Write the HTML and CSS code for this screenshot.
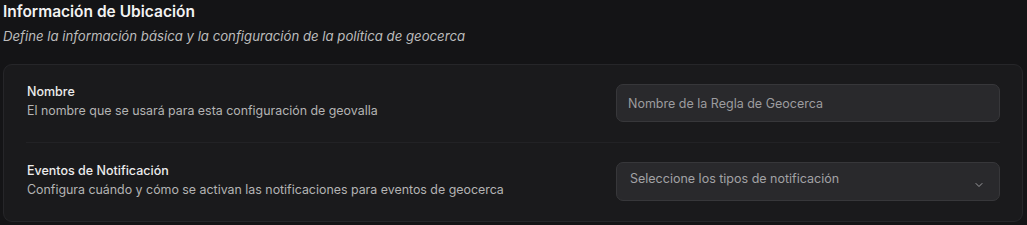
FILE: index.html
```html
<!DOCTYPE html>
<html lang="es">
<head>
    <meta charset="UTF-8">
    <meta name="viewport" content="width=device-width, initial-scale=1.0">
    <title>Información de Ubicación</title>
    <link rel="stylesheet" href="styles.css">
</head>
<body>
    <div class="section">
        <h2 class="section-title">Información de Ubicación</h2>
        <p class="section-subtitle">Define la información básica y la configuración de la política de geocerca</p>

        <div class="card">
            <div class="field-row">
                <div class="field-text">
                    <div class="field-label">Nombre</div>
                    <div class="field-desc">El nombre que se usará para esta configuración de geovalla</div>
                </div>
                <div class="field-control">
                    <input type="text" class="text-input" placeholder="Nombre de la Regla de Geocerca">
                </div>
            </div>

            <div class="field-row">
                <div class="field-text">
                    <div class="field-label">Eventos de Notificación</div>
                    <div class="field-desc">Configura cuándo y cómo se activan las notificaciones para eventos de geocerca</div>
                </div>
                <div class="field-control">
                    <div class="select-box">
                        <span class="select-placeholder">Seleccione los tipos de notificación</span>
                        <svg class="chevron" width="12" height="12" viewBox="0 0 24 24" fill="none" stroke="currentColor" stroke-width="1.8" stroke-linecap="round" stroke-linejoin="round">
                            <path d="M6 9l6 6 6-6"/>
                        </svg>
                    </div>
                </div>
            </div>
        </div>
    </div>
</body>
</html>
```

FILE: styles.css
```css
body {
    margin: 0;
    padding: 0 3px;
    background: #141416;
    font-family: Inter, 'Noto Sans', sans-serif;
    color: #e6e6e6;
}

.section {
    padding-top: 1px;
}

.section-title {
    margin: 0;
    font-size: 15.5px;
    font-weight: 600;
    line-height: 22px;
    color: #f2f2f2;
}

.section-subtitle {
    margin: 4px 0 0 0;
    font-size: 13.2px;
    font-style: italic;
    line-height: 18px;
    color: #bdbdbd;
}

.card {
    margin-top: 19px;
    background: #1a1a1c;
    border: 1px solid #262629;
    border-radius: 9px;
    padding: 0 22px;
    width: 974px;
}

.field-row {
    display: flex;
    align-items: center;
    justify-content: space-between;
    padding: 19px 0 20px 0;
}

.field-row + .field-row {
    border-top: 1px solid #222225;
}

.field-text {
    padding-left: 1px;
    margin-top: -4px;
}

.field-label {
    font-size: 12.5px;
    font-weight: 500;
    color: #ececec;
    line-height: 17px;
}

.field-desc {
    margin-top: 3px;
    font-size: 12.4px;
    color: #b4b4b4;
    line-height: 16px;
}

.field-control {
    width: 384px;
}

.text-input {
    box-sizing: border-box;
    width: 100%;
    height: 38px;
    padding: 0 11px;
    background: #29292c;
    border: 1px solid #37373a;
    border-radius: 7px;
    color: #e6e6e6;
    font-family: inherit;
    font-size: 12.5px;
    outline: none;
}

.text-input::placeholder {
    color: #9c9c9f;
}

.select-box {
    box-sizing: border-box;
    height: 39px;
    display: flex;
    align-items: center;
    justify-content: space-between;
    padding: 0 14px 0 13px;
    background: #29292c;
    border: 1px solid #37373a;
    border-radius: 7px;
}

.select-placeholder {
    font-size: 12.5px;
    color: #a2a2a5;
    margin-top: -7px;
}

.chevron {
    color: #a8a8ab;
    margin-top: 6px;
}
```
